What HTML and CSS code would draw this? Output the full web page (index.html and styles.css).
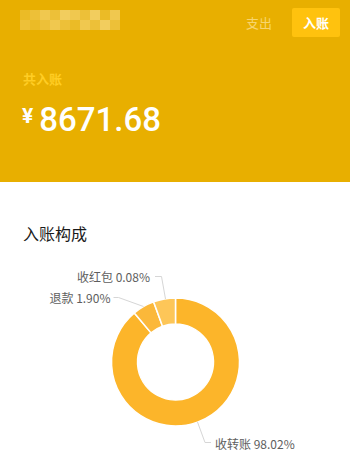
FILE: index.html
```html
<!DOCTYPE html>
<html lang="zh">
<head>
<meta charset="utf-8">
<link rel="stylesheet" href="styles.css">
</head>
<body>
<header class="hero">
  <div class="topbar">
    <div class="blur">
      <span class="px p1"></span><span class="px p2"></span><span class="px p3"></span><span class="px p2"></span><span class="px p4"></span><span class="px p3"></span><span class="px p2"></span><span class="px p4"></span><span class="px p1"></span><span class="px p3"></span>
      <span class="px p2"></span><span class="px p1"></span><span class="px p2"></span><span class="px p3"></span><span class="px p2"></span><span class="px p1"></span><span class="px p3"></span><span class="px p2"></span><span class="px p4"></span><span class="px p2"></span>
    </div>
    <div class="tabs">
      <span class="tab">支出</span>
      <span class="tab active">入账</span>
    </div>
  </div>
  <div class="label">共入账</div>
  <div class="amount"><span class="yen">¥</span><span class="num">8671.68</span></div>
</header>
<section class="panel">
  <h2 class="title">入账构成</h2>
  <svg class="chart" width="350" height="221" viewBox="0 0 350 221">
    <g class="ring">
      <path class="seg big" d="M 175.5 53 A 64 64 0 1 1 134.36 67.98 L 151.07 87.89 A 38 38 0 1 0 175.5 79 Z"/>
      <path class="seg mid" d="M 134.36 67.98 A 64 64 0 0 1 153.61 56.86 L 162.5 81.29 A 38 38 0 0 0 151.07 87.89 Z"/>
      <path class="seg small" d="M 153.61 56.86 A 64 64 0 0 1 175.5 53 L 175.5 79 A 38 38 0 0 0 162.5 81.29 Z"/>
    </g>
    <polyline class="leader" points="155,31.5 161.5,31.5 165.5,54"/>
    <polyline class="leader" points="113.5,52.5 118.5,52.5 143.5,61.5"/>
    <polyline class="leader" points="197.5,177 205,197.5 211,197.5"/>
    <text class="lbl" x="150" y="31.5" text-anchor="end">收红包 0.08%</text>
    <text class="lbl" x="110.5" y="52.5" text-anchor="end">退款 1.90%</text>
    <text class="lbl" x="215" y="198.5" text-anchor="start">收转账 98.02%</text>
  </svg>
</section>
</body>
</html>
```
FILE: styles.css
```css
* { box-sizing: border-box; }
html, body { margin: 0; padding: 0; background: #fff; }
body {
  width: 350px;
  height: 466px;
  overflow: hidden;
  font-family: "Noto Sans CJK SC", "Noto Sans", sans-serif;
}
.hero {
  height: 182px;
  background: #e8af00;
  padding: 8px 10px 0 20px;
}
.topbar {
  display: flex;
  justify-content: space-between;
  align-items: flex-start;
  height: 29px;
}
.blur {
  margin-top: 2px;
  width: 100px;
  height: 20px;
  display: grid;
  grid-template-columns: repeat(10, 10px);
  grid-template-rows: repeat(2, 10px);
}
.px { display: block; }
.p1 { background: #ebbb26; }
.p2 { background: #edc038; }
.p3 { background: #f0c84f; }
.p4 { background: #f2cd5e; }
.tabs {
  display: flex;
  align-items: center;
  gap: 20px;
  height: 29px;
}
.tab {
  font-size: 13px;
  color: #f7d56f;
  line-height: 29px;
}
.tab.active {
  width: 48px;
  height: 29px;
  text-align: center;
  background: #ffc20e;
  color: #fff;
  font-weight: 700;
  border-radius: 2px;
}
.label {
  margin-top: 34px;
  margin-left: 3px;
  font-size: 13px;
  line-height: 16px;
  font-weight: 700;
  color: #ffcd24;
}
.amount {
  margin-top: 13px;
  margin-left: 2px;
  display: flex;
  align-items: baseline;
  color: #fff;
}
.yen {
  font-family: "Roboto", "Noto Sans", sans-serif;
  font-size: 21px;
  font-weight: 700;
  margin-right: 6px;
  position: relative;
  top: -8px;
}
.num {
  font-family: "Roboto", "Noto Sans", sans-serif;
  font-size: 33px;
  font-weight: 500;
  line-height: 40px;
}
.panel {
  padding-top: 39px;
}
.title {
  margin: 0 0 0 23px;
  font-size: 16px;
  line-height: 24px;
  font-weight: 400;
  color: #1a1a1a;
}
.chart { display: block; }
.seg { stroke: #fff; stroke-width: 1.5; }
.big { fill: #fcb52a; }
.mid { fill: #fbb83a; }
.small { fill: #fdc658; }
.leader { fill: none; stroke: #d6d6d6; stroke-width: 1; }
.lbl {
  font-family: "Noto Sans CJK SC", "Noto Sans", sans-serif;
  font-size: 12px;
  fill: #5e5e5e;
  dominant-baseline: central;
}
```
